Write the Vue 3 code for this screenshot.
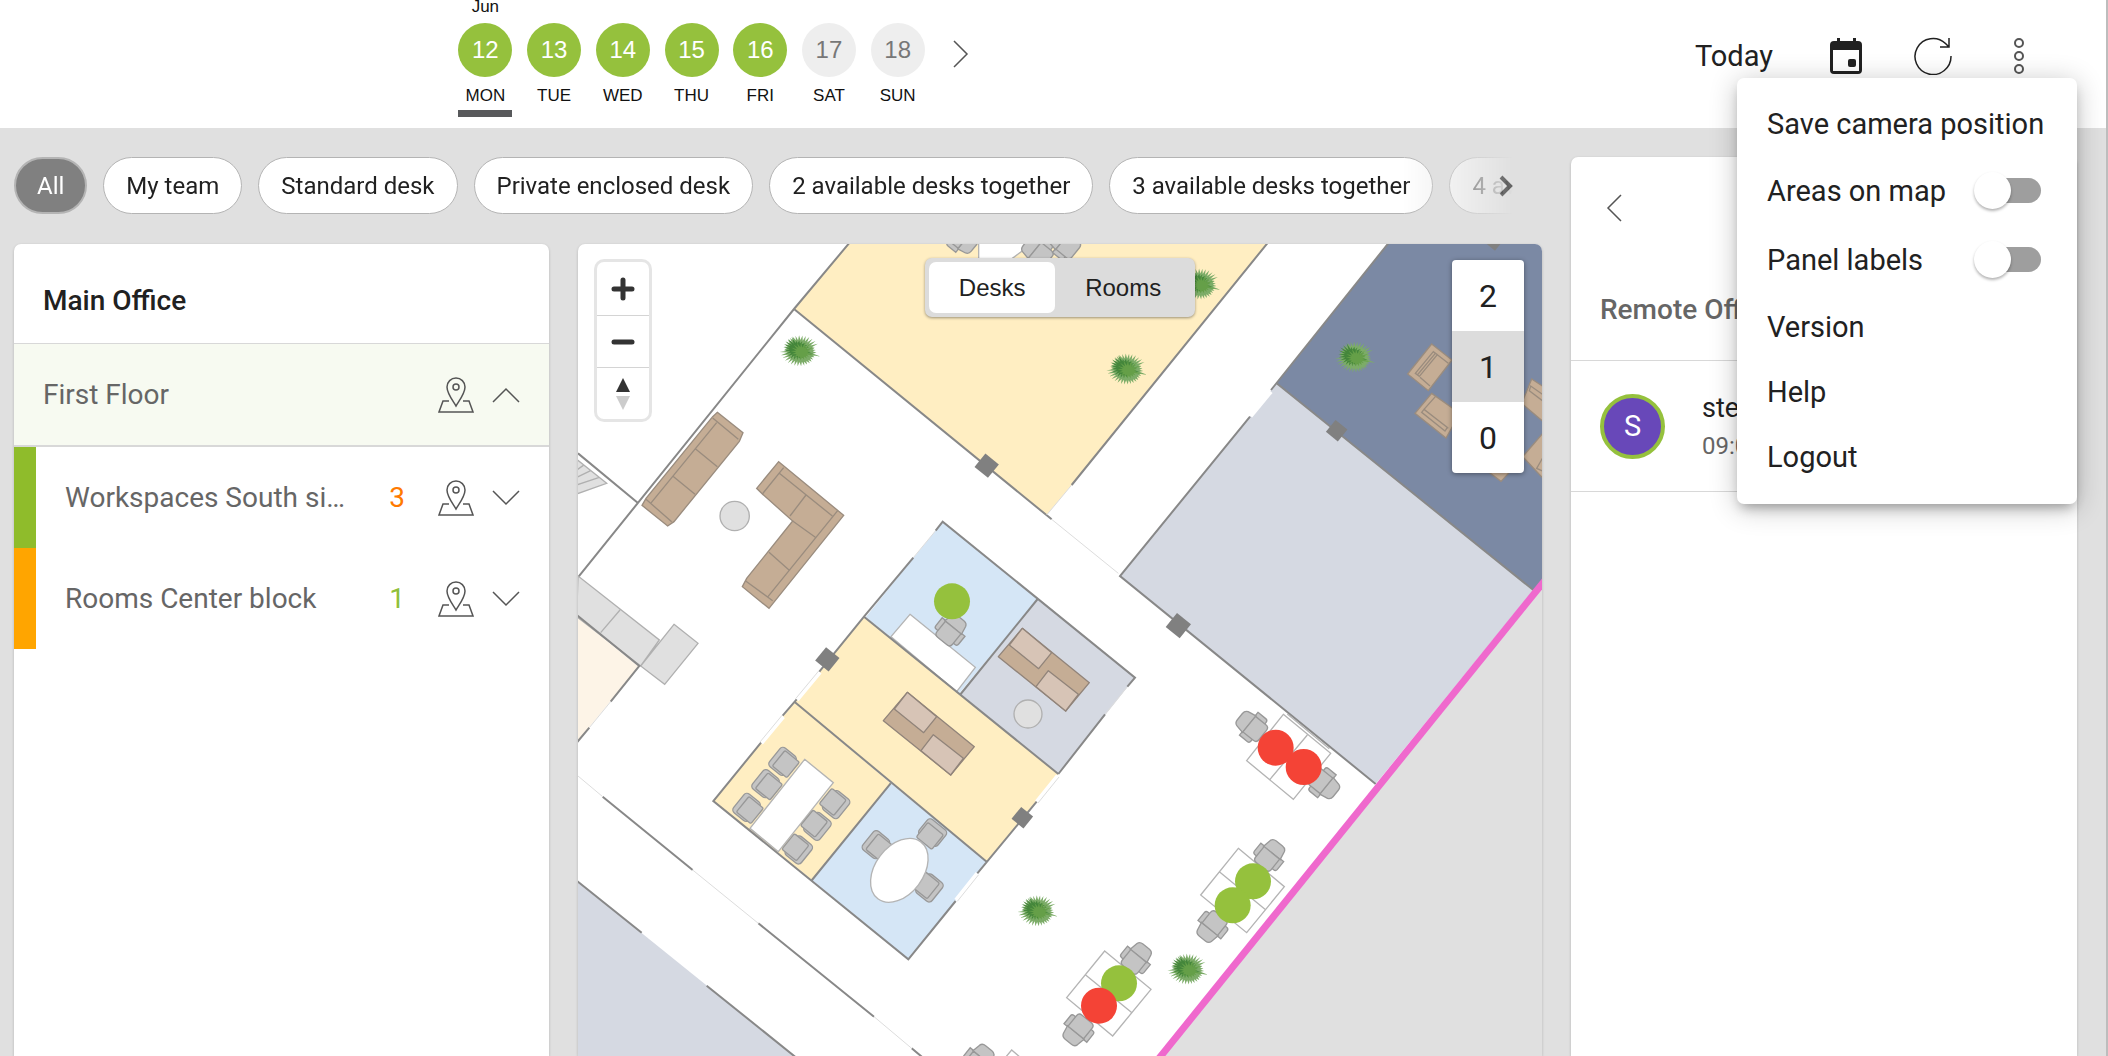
<script setup>
import { ref } from 'vue'

const days = [
  { num: 12, name: 'MON', month: 'Jun', selected: true },
  { num: 13, name: 'TUE' },
  { num: 14, name: 'WED' },
  { num: 15, name: 'THU' },
  { num: 16, name: 'FRI' },
  { num: 17, name: 'SAT', off: true },
  { num: 18, name: 'SUN', off: true }
]

const filters = [
  'All',
  'My team',
  'Standard desk',
  'Private enclosed desk',
  '2 available desks together',
  '3 available desks together',
  '4 available desks together'
]
const activeFilter = ref('All')

const areas = [
  { name: 'Workspaces South side', count: 3, tone: 'green', countTone: 'warn' },
  { name: 'Rooms Center block', count: 1, tone: 'orange', countTone: 'ok' }
]

const mode = ref('Desks')
const level = ref(1)
const areasOnMap = ref(false)
const panelLabels = ref(false)

// Floor plan data, in plan units (three per pixel)
function spikes(count, inner, outer) {
  const pts = []
  for (let i = 0; i < count * 2; i++) {
    const a = (Math.PI * i) / count
    const r = i % 2 ? inner : outer - ((i * 7) % 15)
    pts.push(`${Math.round(Math.cos(a) * r * 1.08)},${Math.round(Math.sin(a) * r * 0.9)}`)
  }
  return pts.join(' ')
}
const leafBack = spikes(34, 36, 58)
const leafMid = spikes(23, 22, 44)
const leafFront = spikes(17, 16, 38)

const plants = [[666, 321], [1646, 376], [1866, 121], [2331, 340], [1829, 2176], [1379, 2001]]
const pillars = [[1226, 665, 52], [2276, 560, 46], [1801, 1145, 54], [748, 1246, 52], [1333, 1721, 46], [2748, -8, 40]]
const roundTables = [[470, 816, 44], [1350, 1410, 42]]
const meetingChairs = [
  [616, 1554, 39], [565, 1621, 39], [508, 1692, 39],
  [772, 1680, 219], [716, 1745, 219], [660, 1816, 219],
  [896, 1804, 39], [1062, 1768, 129], [1052, 1930, 219]
]
const deskChairs = [
  [1118, 1160, 129], [2023, 1448, 39], [2236, 1618, 219], [2074, 1836, 129],
  [1903, 2046, 309], [1674, 2145, 129], [1501, 2356, 309],
  [1150, -18, 219], [1380, 26, 39], [1462, 0, 39], [1202, 2450, 129]
]
const pins = [
  [1122, 1072, 'free'], [2093, 1511, 'busy'], [2177, 1569, 'busy'], [2025, 1912, 'free'],
  [1964, 1984, 'free'], [1623, 2218, 'free'], [1563, 2285, 'busy']
]
</script>

<template>
  <div class="app">
    <header class="topbar">
      <nav class="week" aria-label="Week">
        <div class="days">
          <button v-for="d in days" :key="d.num" type="button" class="day" :class="{ off: d.off, selected: d.selected }">
            <span class="month">{{ d.month }}</span>
            <span class="num">{{ d.num }}</span>
            <span class="name">{{ d.name }}</span>
          </button>
        </div>
        <button type="button" class="icon-btn next" aria-label="Next week">
          <svg width="16" height="28" viewBox="0 0 16 28"><path d="M1 1l13 13L1 27" /></svg>
        </button>
      </nav>
      <div class="actions">
        <button type="button" class="today">Today</button>
        <button type="button" class="icon-btn" aria-label="Calendar">
          <svg width="34" height="38" viewBox="0 0 34 38" class="solid">
            <path d="M8 1v3H5a4 4 0 0 0-4 4v25a4 4 0 0 0 4 4h24a4 4 0 0 0 4-4V8a4 4 0 0 0-4-4h-2V1h-3v3H11V1zM4 13h26v21H4z" fill-rule="evenodd" />
            <rect x="19" y="22" width="8" height="8" rx="2" />
          </svg>
        </button>
        <button type="button" class="icon-btn" aria-label="Refresh">
          <svg width="38" height="38" viewBox="0 0 38 38" class="dark"><path d="M37 19A18 18 0 1 1 31.500 6.500L35 10M35 1v9h-9" /></svg>
        </button>
        <button type="button" class="icon-btn" aria-label="More">
          <svg width="12" height="38" viewBox="0 0 12 38" class="dots"><circle cx="6" cy="6" r="4" /><circle cx="6" cy="19" r="4" /><circle cx="6" cy="32" r="4" /></svg>
        </button>
      </div>
      <div class="menu">
        <button type="button" class="menu-item">Save camera position</button>
        <label class="menu-item toggle-row">Areas on map<input v-model="areasOnMap" type="checkbox" class="switch" /></label>
        <label class="menu-item toggle-row">Panel labels<input v-model="panelLabels" type="checkbox" class="switch" /></label>
        <button type="button" class="menu-item">Version</button>
        <button type="button" class="menu-item">Help</button>
        <button type="button" class="menu-item">Logout</button>
      </div>
    </header>

    <main class="content">
      <div class="primary">
        <div class="filters">
          <div class="chips">
            <button v-for="f in filters" :key="f" type="button" class="chip" :class="{ active: f === activeFilter }" @click="activeFilter = f">{{ f }}</button>
          </div>
          <button type="button" class="icon-btn more" aria-label="More filters">
            <svg width="14" height="22" viewBox="0 0 14 22"><path d="M2 2l9 9-9 9" /></svg>
          </button>
        </div>

        <div class="columns">
          <section class="card office">
            <h2 class="title">Main Office</h2>
            <div class="row floor">
              <span class="label">First Floor</span>
              <button type="button" class="icon-btn" aria-label="Show on map">
                <svg width="36" height="36" viewBox="0 0 36 36" class="pin"><path d="M18 29C13 21 9 16 9 10a9 9 0 0 1 18 0c0 6-4 11-9 19z" /><circle cx="18" cy="10" r="3" /><path d="M11 24H5L1 35h34l-4-11h-6" /></svg>
              </button>
              <button type="button" class="icon-btn" aria-label="Collapse">
                <svg width="28" height="16" viewBox="0 0 28 16"><path d="M1 15L14 2l13 13" /></svg>
              </button>
            </div>
            <div v-for="a in areas" :key="a.name" class="row area" :class="a.tone">
              <span class="label">{{ a.name }}</span>
              <span class="count" :class="a.countTone">{{ a.count }}</span>
              <button type="button" class="icon-btn" aria-label="Show on map">
                <svg width="36" height="36" viewBox="0 0 36 36" class="pin"><path d="M18 29C13 21 9 16 9 10a9 9 0 0 1 18 0c0 6-4 11-9 19z" /><circle cx="18" cy="10" r="3" /><path d="M11 24H5L1 35h34l-4-11h-6" /></svg>
              </button>
              <button type="button" class="icon-btn" aria-label="Expand">
                <svg width="28" height="16" viewBox="0 0 28 16"><path d="M1 1l13 13L27 1" /></svg>
              </button>
            </div>
          </section>

          <section class="card map">
            <svg class="plan" viewBox="0 0 2892 2436" preserveAspectRatio="xMinYMin slice" aria-label="Floor plan">
              <!-- outside of the building -->
              <path class="outside" d="M2892 1020L1749 2436H2892z" />

              <!-- north rooms -->
              <g transform="translate(-24 -12)">
                <path class="yellow" d="M835 10L672 207 1430 825 1505 735 2092 10z" />
                <path class="wall" d="M837 10L672 207 24 1012M24 640L203 788M672 207L1445 838M1505 735L2092 10" />
                <path class="thin" d="M1430 825L1505 735M1445 838L1645 1000" />
                <path class="counter" d="M20 658L110 730 20 762M20 690L40 676M20 712L62 692M20 735L88 712" />
                <path class="furn white" d="M1226 0V60H1320L1385 12z" />
                <g class="sofa">
                  <path d="M442 517L519 578 508 604 312 845 293 858 216 796 228 775 428 530z" />
                  <path d="M428 534L505 598M440 548L242 790M376 626L442 680M309 709L375 763M228 778L305 845" />
                  <path d="M626 665L821 826 597 1105 517 1040 530 1015 668 843 577 762 560 745z" />
                  <path d="M641 683L577 762M628 700L787 828M708 765L660 828M668 843L736 892M803 812L592 1072M597 937L657 990M526 1022L608 1082" />
                </g>
              </g>

              <!-- east rooms -->
              <g transform="translate(1446 -12)">
                <path class="navy" d="M985 10L650 430 1420 1050 1450 1024V10z" />
                <path class="mist" d="M650 430L180 1008 947 1632 1420 1050z" />
                <path class="wall" d="M985 10L633 450M570 530L180 1008 947 1632M650 430L1420 1050" />
                <path class="opening" d="M633 455L572 529" />
                <g class="sofa">
                  <path d="M1115 312L1176 360 1105 452 1043 402z" />
                  <path d="M1120 335L1066 400 1078 409 1132 344zM1126 340L1072 405M1132 344L1165 370M1080 412L1110 438" />
                  <path d="M1115 460L1200 520 1158 594 1065 520z" />
                  <path d="M1092 508L1085 517 1155 573 1162 562zM1126 470L1092 508 1165 565" />
                  <path d="M1415 417L1450 440V545L1385 490z" />
                  <path d="M1450 465L1412 438 1408 452 1450 484" />
                  <path d="M1450 578L1388 650 1450 716z" />
                  <path d="M1450 650L1430 685 1450 694" />
                  <path d="M1285 695L1323 724 1350 695z" />
                </g>
              </g>

              <!-- west kitchen and south corridor -->
              <g transform="translate(-24 948)">
                <path class="cream" d="M20 170L206 320 20 548z" />
                <path class="counter" d="M24 48L268 240 212 318 20 170zM150 150L92 218M312 193L384 250 284 373 212 318z" />
                <path class="wall" d="M20 165L208 318 122 425M58 503L20 548M98 710L368 930M565 1090L912 1370M1025 1465L1060 1494" />
                <path class="thin" d="M122 425L58 503M24 648L98 710M368 930L565 1090M912 1370L1025 1465" />
                <path class="mist" d="M20 962L680 1494H20z" />
                <path class="wall" d="M20 962L215 1118M410 1277L680 1494" />
                <path class="furn white" d="M1300 1500L1325 1470 1360 1500z" />
              </g>

              <!-- centre block -->
              <g transform="translate(366 768)">
                <path class="sky" d="M728 65L1013 297 778 580 497 352z" />
                <path class="mist" d="M1013 297L1305 533 1075 822 782 582z" />
                <path class="yellow" d="M492 350L1075 822 860 1085 285 607z" />
                <path class="yellow" d="M285 607L572 850 336 1140 40 903z" />
                <path class="sky" d="M572 850L860 1085 625 1378 336 1140z" />
                <path class="furn white" d="M630 343L826 502 770 575 573 410z" />
                <path class="furn white" d="M314 778L400 848 235 1055 150 985z" />
                <path class="opening" d="M360 517L291 600M250 650L184 730M768 1200L832 1120M1010 905L1073 827" />
                <path class="thin" d="M707 92L640 173M1282 560L1215 643M356 513L287 596M246 646L180 726M772 1204L836 1124M1014 909L1077 831" />
                <path class="wall" d="M707 92L728 65 1305 533 1282 560M640 173L492 350 358 515M290 598L248 647M183 728L40 903 625 1378 767 1203M832 1120L1010 905M1075 822L1215 643M492 350L1075 822M1013 297L782 582M285 607L860 1085M572 850L336 1140" />
                <g v-for="(o, i) in [[0, 0], [-345, 192]]" :key="i" :transform="`translate(${o[0]} ${o[1]})`" class="bed">
                  <path d="M967 385L1168 548 1097 633 895 470z" />
                  <path class="cushion" d="M967 385L1055 458 1016 506 928 435zM1045 512L1135 583 1097 633 1008 560z" />
                </g>
              </g>

              <!-- desks along the south side -->
              <g transform="translate(1446 1188)">
                <path class="furn white" d="M670 223L812 340 700 478 560 362zM742 285L630 418M682 222L808 326" />
                <path class="furn white" d="M535 625L673 740 560 878 422 765zM478 695L615 808" />
                <path class="furn white" d="M134 933L273 1048 158 1188 20 1073zM76 1004L214 1117" />
              </g>

              <g v-for="(c, i) in meetingChairs" :key="'m' + i" :transform="`translate(${c[0]} ${c[1]}) rotate(${c[2]})`" class="chair">
                <rect x="-33" y="-36" width="60" height="72" rx="12" />
                <rect x="-18" y="-30" width="56" height="60" rx="5" />
              </g>
              <ellipse class="furn white" cx="964" cy="1879" rx="107" ry="72" transform="rotate(-53 964 1879)" />
              <circle v-for="(t, i) in roundTables" :key="'t' + i" class="counter" :cx="t[0]" :cy="t[1]" :r="t[2]" />
              <g v-for="(c, i) in deskChairs" :key="'d' + i" :transform="`translate(${c[0]} ${c[1]}) rotate(${c[2]})`" class="chair">
                <path d="M-14 -44H16Q24 -44 24 -36V36Q24 44 16 44H-14z" />
                <path d="M-12 -32L-38 -27Q-48 -24 -48 -12V12Q-48 24 -38 27L-12 32z" />
                <path d="M-12 -30H28Q40 -30 40 -18V18Q40 30 28 30H-12z" />
              </g>
              <rect v-for="(p, i) in pillars" :key="'p' + i" class="pillar" :x="-p[2] / 2" :y="-p[2] / 2" :width="p[2]" :height="p[2]" :transform="`translate(${p[0]} ${p[1]}) rotate(39)`" />
              <g v-for="(p, i) in plants" :key="'l' + i" :transform="`translate(${p[0]} ${p[1]}) rotate(15)`">
                <polygon :points="leafBack" class="leaf-back" />
                <polygon :points="leafMid" class="leaf-mid" transform="translate(-8 -2)" />
                <polygon :points="leafFront" class="leaf-front" transform="translate(6 2)" />
              </g>
              <path class="boundary" d="M2904 1005L1739 2448" />
              <circle v-for="(p, i) in pins" :key="'s' + i" :class="p[2]" :cx="p[0]" :cy="p[1]" r="54" />
            </svg>

            <div class="zoom-ctrl">
              <button type="button" aria-label="Zoom in"><svg width="24" height="24" viewBox="0 0 24 24"><path d="M12 3v18M3 12h18" /></svg></button>
              <button type="button" aria-label="Zoom out"><svg width="24" height="24" viewBox="0 0 24 24"><path d="M3 12h18" /></svg></button>
              <button type="button" aria-label="Reset north"><svg width="14" height="32" viewBox="0 0 14 32" class="compass"><path d="M0 14L7 0l7 14z" /><path class="south" d="M0 18l7 14 7-14z" /></svg></button>
            </div>

            <div class="mode">
              <button v-for="m in ['Desks', 'Rooms']" :key="m" type="button" :class="{ active: m === mode }" @click="mode = m">{{ m }}</button>
            </div>

            <div class="levels">
              <button v-for="l in [2, 1, 0]" :key="l" type="button" :class="{ active: l === level }" @click="level = l">{{ l }}</button>
            </div>
          </section>
        </div>
      </div>

      <aside class="card remote">
        <div class="back">
          <button type="button" class="icon-btn" aria-label="Back">
            <svg width="16" height="28" viewBox="0 0 16 28"><path d="M15 1L2 14l13 13" /></svg>
          </button>
        </div>
        <h2 class="title muted">Remote Office</h2>
        <div class="person">
          <span class="avatar">S</span>
          <div>
            <div class="who">stefan</div>
            <div class="when">09:00</div>
          </div>
        </div>
      </aside>
    </main>
  </div>
</template>

<style>
body {
  margin: 0;
  background: #e0e0e0;
}
</style>

<style scoped>
.app {
  box-sizing: border-box;
  height: 100vh;
  display: flex;
  flex-direction: column;
  overflow: hidden;
  border-right: 2px solid #bdbdbd;
  background: #e0e0e0;
  color: #212121;
  font-family: Roboto, sans-serif;
}
button {
  border: 0;
  padding: 0;
  background: none;
  color: inherit;
  font: inherit;
  cursor: pointer;
}
svg {
  display: block;
}
.icon-btn svg {
  fill: none;
  stroke: #555;
  stroke-width: 1.500;
}
.icon-btn svg.solid {
  fill: #212121;
  stroke: none;
}
.icon-btn svg.dark {
  stroke: #212121;
}
.icon-btn svg.dots {
  stroke-width: 2;
}

.topbar {
  position: relative;
  flex: none;
  box-sizing: border-box;
  height: 128px;
  display: flex;
  justify-content: space-between;
  background: #fff;
}
.week {
  display: flex;
  align-items: flex-start;
  margin-left: 451px;
  font-family: "Liberation Sans", Arial, sans-serif;
  color: #111;
}
.days {
  display: flex;
  width: 481px;
}
.day {
  flex: 1;
  display: flex;
  flex-direction: column;
  align-items: center;
}
.month {
  height: 23px;
  font-size: 17px;
  line-height: 14px;
}
.num {
  width: 54px;
  height: 54px;
  border-radius: 50%;
  background: #95c13d;
  color: #fff;
  font-size: 24px;
  line-height: 54px;
}
.off .num {
  background: #eee;
  color: #777;
}
.name {
  height: 33px;
  width: 54px;
  box-sizing: content-box;
  font-size: 17px;
  line-height: 38px;
}
.selected .name {
  border-bottom: 7px solid #58595b;
}
.next {
  margin: 40px 0 0 21px;
}
.actions {
  display: flex;
  align-items: flex-start;
  padding: 37px 81px 0 0;
}
.actions .icon-btn {
  margin-left: 51px;
}
.actions .icon-btn:last-child {
  margin-left: 61px;
}
.today {
  font-size: 29px;
  line-height: 38px;
}
.actions .today + .icon-btn {
  margin-left: 56px;
}

.menu {
  position: absolute;
  z-index: 5;
  top: 78px;
  right: 29px;
  width: 340px;
  box-sizing: border-box;
  padding: 13px 30px 15px;
  border-radius: 7px;
  background: #fff;
  box-shadow: 0 7px 12px -4px rgba(0, 0, 0, 0.3), 0 4px 28px rgba(0, 0, 0, 0.24);
  display: flex;
  flex-direction: column;
}
.menu-item {
  height: 65px;
  display: flex;
  align-items: center;
  font-size: 29px;
  text-align: left;
  white-space: nowrap;
}
.toggle-row {
  height: 69px;
  justify-content: space-between;
}
.switch {
  appearance: none;
  position: relative;
  width: 60px;
  height: 25px;
  margin: 0 6px 0 0;
  border-radius: 13px;
  background: #9e9e9e;
}
.switch::before {
  content: "";
  position: absolute;
  left: -7px;
  top: -6px;
  width: 37px;
  height: 37px;
  border-radius: 50%;
  background: #fff;
  box-shadow: 0 2px 3px rgba(0, 0, 0, 0.3);
}

.content {
  flex: 1;
  min-height: 0;
  display: flex;
  gap: 29px;
  padding: 0 29px 0 14px;
}
.primary {
  flex: 1;
  min-width: 0;
  display: flex;
  flex-direction: column;
}
.filters {
  flex: none;
  display: flex;
  align-items: center;
  padding: 29px 29px 30px 0;
}
.chips {
  flex: 1;
  min-width: 0;
  overflow: hidden;
  display: flex;
  gap: 16px;
  -webkit-mask-image: linear-gradient(to left, transparent, #000 112px);
  mask-image: linear-gradient(to left, transparent, #000 112px);
}
.chip {
  flex: none;
  box-sizing: border-box;
  height: 57px;
  padding: 0 22px;
  border: 1px solid #b4b4b4;
  border-radius: 29px;
  background: #fff;
  font-size: 24px;
  white-space: nowrap;
}
.chip.active {
  padding: 0 21px;
  border: 2px solid #b4b4b4;
  background: #808080;
  color: #fff;
}
.more {
  margin-left: -14px;
}
.icon-btn.more svg {
  stroke: #616161;
  stroke-width: 4;
}
.columns {
  flex: 1;
  min-height: 0;
  display: flex;
  gap: 29px;
}
.card {
  background: #fff;
  border-radius: 7px 7px 0 0;
  box-shadow: 0 1px 3px rgba(0, 0, 0, 0.2);
  overflow: hidden;
}
.office {
  flex: none;
  width: 535px;
}
.title {
  margin: 0;
  height: 100px;
  box-sizing: border-box;
  padding: 14px 29px 0;
  border-bottom: 1px solid #d8d8d8;
  font-size: 28px;
  font-weight: 500;
  line-height: 86px;
  white-space: nowrap;
}
.row {
  display: flex;
  align-items: center;
  box-sizing: border-box;
  height: 101px;
  padding: 0 29px;
  color: #666;
  font-size: 28px;
}
.row .icon-btn + .icon-btn {
  margin-left: 18px;
}
.floor {
  height: 103px;
  background: #f7faf1;
  border-bottom: 2px solid #d8d8d8;
}
.area {
  border-left: 22px solid #8fbc2b;
}
.area.orange {
  border-color: #ffa500;
}
.label {
  flex: 1;
  min-width: 0;
  overflow: hidden;
  text-overflow: ellipsis;
  white-space: nowrap;
}
.count {
  margin: 0 33px 0 44px;
}
.warn {
  color: #ff7a00;
}
.ok {
  color: #8fbf3a;
}

.map {
  position: relative;
  flex: 1;
  min-width: 0;
}
.plan {
  position: absolute;
  width: 100%;
  height: 100%;
}
.outside { fill: #e0e0e0; }
.yellow { fill: #ffeec2; }
.navy { fill: #7b89a4; }
.mist { fill: #d5d9e2; }
.sky { fill: #d5e6f6; }
.cream { fill: #fdf4e7; }
.white { fill: #fff; }
.wall { fill: none; stroke: #888; stroke-width: 6; }
.thin { fill: none; stroke: #ddd; stroke-width: 3; }
.opening { fill: none; stroke: #fff; stroke-width: 12; }
.furn { stroke: #b4b4b4; stroke-width: 4; }
.counter { fill: #e0e0e0; stroke: #b0b0b0; stroke-width: 4; }
.sofa path { fill: #c5ad95; stroke: #9a8c7e; stroke-width: 4; }
.sofa path:nth-child(even) { fill: none; }
.bed path { fill: #c5ad95; stroke: #91847a; stroke-width: 4; stroke-linejoin: round; }
.bed .cushion { fill: #d7c4b6; }
.chair * { fill: #c4c4c4; stroke: #989898; stroke-width: 4; }
.pillar { fill: #808080; }
.leaf-back { fill: #7cac68; }
.leaf-mid { fill: #44863b; }
.leaf-front { fill: #659f48; }
.boundary { stroke: #ef69cd; stroke-width: 21; }
.free { fill: #95c13d; }
.busy { fill: #f44336; }

.zoom-ctrl {
  position: absolute;
  left: 16px;
  top: 15px;
  width: 52px;
  display: flex;
  flex-direction: column;
  border: 3px solid rgba(0, 0, 0, 0.1);
  border-radius: 10px;
  background: #fff;
  background-clip: padding-box;
}
.zoom-ctrl button {
  height: 53px;
  display: flex;
  align-items: center;
  justify-content: center;
}
.zoom-ctrl button + button {
  height: 52px;
  border-top: 1px solid #d4d4d4;
}
.zoom-ctrl svg {
  stroke: #333;
  stroke-width: 5;
  stroke-linecap: round;
}
.zoom-ctrl .compass {
  stroke: none;
  fill: #333;
}
.compass .south {
  fill: #ccc;
}
.mode {
  position: absolute;
  left: 50%;
  top: 14px;
  width: 262px;
  margin-left: -135px;
  padding: 4px;
  display: flex;
  border-radius: 7px;
  background: #dcdcdc;
  box-shadow: 0 1px 3px rgba(0, 0, 0, 0.4);
}
.mode button {
  flex: 1 1 auto;
  height: 51px;
  padding: 0 28px;
  border-radius: 7px;
  font-family: "Liberation Sans", Arial, sans-serif;
  font-size: 24px;
}
.mode button.active {
  background: #fff;
}
.levels {
  position: absolute;
  right: 18px;
  top: 16px;
  width: 72px;
  display: flex;
  flex-direction: column;
  overflow: hidden;
  border-radius: 4px;
  background: #fff;
  box-shadow: 0 1px 5px rgba(0, 0, 0, 0.4);
}
.levels button {
  height: 71px;
  font-size: 32px;
}
.levels button.active {
  background: #dcdcdc;
}

.remote {
  flex: none;
  width: 506px;
  margin-top: 29px;
}
.back {
  height: 104px;
  box-sizing: border-box;
  padding: 37px 0 0 35px;
}
.title.muted {
  padding-top: 6px;
  color: #666;
}
.person {
  display: flex;
  align-items: center;
  gap: 37px;
  height: 130px;
  padding-left: 29px;
  border-bottom: 1px solid #d8d8d8;
}
.avatar {
  width: 57px;
  height: 57px;
  border: 4px solid #95c13d;
  border-radius: 50%;
  background: #6848b9;
  color: #fff;
  font-size: 29px;
  line-height: 57px;
  text-align: center;
}
.who {
  font-size: 27px;
  line-height: 40px;
}
.when {
  font-size: 24px;
  line-height: 36px;
  color: #666;
}
</style>
